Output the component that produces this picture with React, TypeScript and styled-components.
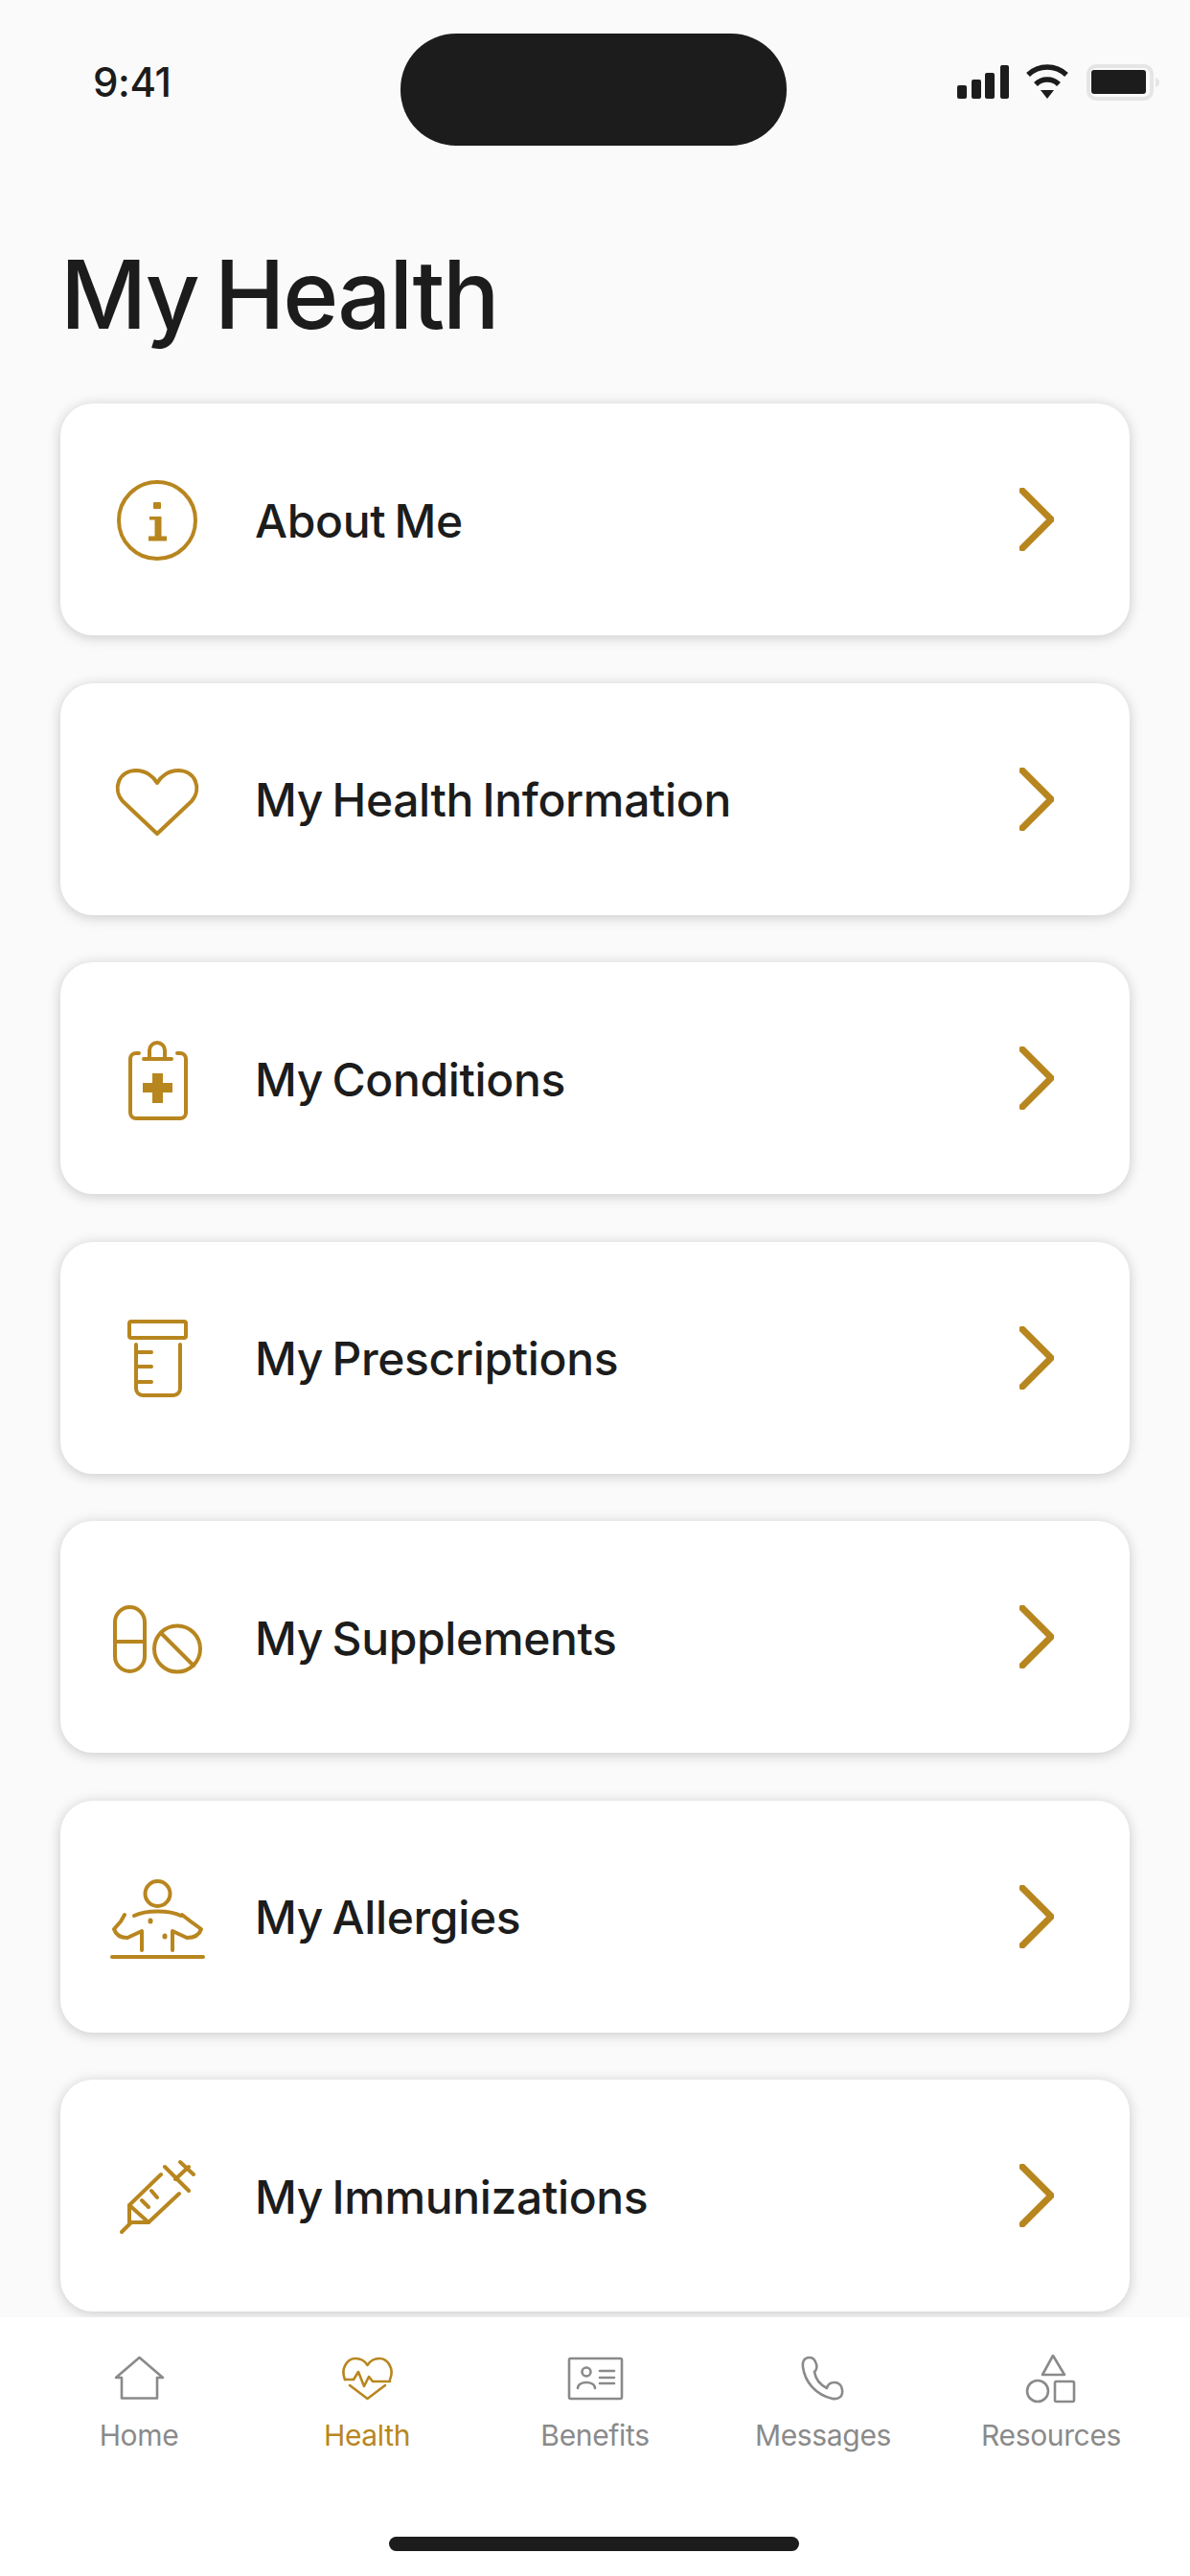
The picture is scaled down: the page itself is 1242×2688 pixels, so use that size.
import React from "react";
import styled, { createGlobalStyle } from "styled-components";

const GOLD = "#b8861f";
const GREY = "#8a8a8a";
const INK = "#1c1c1c";

const GlobalStyle = createGlobalStyle`
  html, body {
    margin: 0;
    padding: 0;
    background: #fafafa;
  }
  * {
    box-sizing: border-box;
  }
`;

const Screen = styled.div`
  width: 1242px;
  height: 2688px;
  display: flex;
  flex-direction: column;
  overflow: hidden;
  background: #fafafa;
  color: ${INK};
  font-family: Inter, "Liberation Sans", sans-serif;
`;

const StatusBar = styled.div`
  display: grid;
  grid-template-columns: 418px 403px 1fr;
  padding-top: 35px;
  height: 152px;
`;

const Clock = styled.div`
  padding: 29px 0 0 97px;
  font-size: 42px;
  line-height: 44px;
  font-weight: 500;
  letter-spacing: -0.4px;
`;

const Island = styled.div`
  height: 117px;
  border-radius: 58px;
  background: ${INK};
`;

const StatusIcons = styled.div`
  padding: 32px 0 0 176px;
  line-height: 0;
`;

const Content = styled.main`
  flex: 1;
  min-height: 0;
  overflow: hidden;
  padding: 0 63px;
`;

const Title = styled.h1`
  margin: 95px 0 0;
  height: 174px;
  font-size: 99px;
  line-height: 120px;
  font-weight: 550;
  letter-spacing: -2.2px;
  word-spacing: -7px;
`;

const List = styled.div`
  display: flex;
  flex-direction: column;
  gap: 49.5px;
`;

const Card = styled.div`
  height: 242px;
  flex: none;
  display: flex;
  align-items: center;
  padding: 0 79px 0 51px;
  border-radius: 34px;
  background: #fff;
  box-shadow: 0 2px 14px rgba(0, 0, 0, 0.2);
`;

const IconSlot = styled.svg`
  width: 100px;
  height: 100px;
  flex: none;
  fill: none;
  stroke: ${GOLD};
  stroke-width: 4;
  stroke-linecap: round;
  stroke-linejoin: round;
`;

const CardLabel = styled.div`
  flex: 1;
  margin-left: 52px;
  padding-top: 3px;
  font-size: 48px;
  line-height: 60px;
  font-weight: 550;
  letter-spacing: -0.35px;
  word-spacing: -3px;
`;

const Chevron = styled.svg`
  width: 36px;
  height: 66px;
  flex: none;
  fill: none;
  stroke: ${GOLD};
  stroke-width: 7;
  stroke-linecap: round;
  stroke-linejoin: miter;
`;

const TabBar = styled.nav`
  height: 270px;
  flex: none;
  position: relative;
  background: #fff;
`;

const TabRow = styled.div`
  display: grid;
  grid-template-columns: repeat(5, 238px);
  padding: 37px 26px 0;
`;

const Tab = styled.div<{ $active?: boolean }>`
  display: flex;
  flex-direction: column;
  align-items: center;
  color: ${(p) => (p.$active ? GOLD : GREY)};
`;

const TabIcon = styled.svg`
  width: 60px;
  height: 54px;
  fill: none;
  stroke: currentColor;
  stroke-width: 2.6;
  stroke-linecap: round;
  stroke-linejoin: round;
`;

const TabLabel = styled.span`
  margin-top: 13px;
  font-size: 30px;
  line-height: 38px;
  font-weight: 400;
  letter-spacing: -0.35px;
`;

const HomeIndicator = styled.div`
  position: absolute;
  left: 406px;
  bottom: 26px;
  width: 428px;
  height: 15px;
  border-radius: 8px;
  background: ${INK};
`;

const SignalWifiBattery = () => (
  <svg width="214" height="40" viewBox="0 0 214 40">
    <g fill={INK}>
      <rect x="2" y="22" width="10" height="14" rx="2" />
      <rect x="17" y="16" width="10" height="20" rx="2" />
      <rect x="31" y="9" width="10" height="27" rx="2" />
      <rect x="47" y="1" width="9" height="35" rx="2" />
      <path d="M76 11a29 29 0 0 1 40 0" fill="none" stroke={INK} strokeWidth="5.5" />
      <path d="M84 21a17 17 0 0 1 24 0" fill="none" stroke={INK} strokeWidth="5.5" />
      <path d="M89 27h14l-7 9z" />
      <rect x="139" y="2" width="66" height="34" rx="8" fill="none" stroke="#e5e5e5" strokeWidth="4" />
      <rect x="142" y="6" width="57" height="25" rx="3" />
      <path d="M209 14c3 1 4 3 4 5s-1 4-4 5z" fill="#e5e5e5" />
    </g>
  </svg>
);

const icons: Record<string, React.ReactNode> = {
  info: (
    <>
      <circle cx="50" cy="51" r="40" />
      <g fill={GOLD} stroke="none">
        <rect x="46" y="32" width="8" height="7" rx="1" />
        <rect x="47.5" y="47" width="7" height="22" />
        <rect x="42" y="47" width="7" height="3.5" />
        <rect x="41" y="67.5" width="19" height="5" />
      </g>
    </>
  ),
  heart: <path d="M50 86L14 52C3 39 10 20 28 20C38 20 46 26 50 33C54 26 62 20 72 20C90 20 97 39 86 52Z" />,
  clipboard: (
    <>
      <path d="M31 24H28a6 6 0 0 0-6 6V86a6 6 0 0 0 6 6H74a6 6 0 0 0 6-6V30a6 6 0 0 0-6-6H71" />
      <path d="M36 30H65M42 30V21a8 8 0 0 1 16 0V30" />
      <g fill={GOLD} stroke="none">
        <rect x="35" y="55" width="31" height="10" />
        <rect x="45" y="45" width="11" height="31" />
      </g>
    </>
  ),
  bottle: (
    <>
      <rect x="21" y="12" width="59" height="17" rx="2" />
      <path d="M28 36V82a7 7 0 0 0 7 7H67a7 7 0 0 0 7-7V36" />
      <path d="M28 44H44M28 59H44M28 75H44" />
    </>
  ),
  pills: (
    <>
      <rect x="6" y="19" width="31" height="67" rx="15.5" />
      <path d="M6 55H37" />
      <circle cx="71" cy="62.5" r="24" />
      <path d="M54 46L88 80" />
    </>
  ),
  body: (
    <>
      <circle cx="50.5" cy="26" r="13" />
      <path d="M26 49C38 43 63 43 75 49" />
      <path d="M16 48L12 55L5 63C7 69 12 72 19 72L34 65V85" />
      <path d="M76 48L85 55L96 63C94 69 89 72 81 72L66 65V85" />
      <path d="M43 54V55M58 70V71" strokeWidth="5" />
      <path d="M3 92H98" />
    </>
  ),
  syringe: (
    <>
      <path d="M13 88L23 78" />
      <path d="M21 60V78H41Z" strokeWidth="4" />
      <path d="M21 60L54 28M41 78L73 48M34 55L41 62M44 45L50 52" />
      <path d="M58 20L83 45M69 33L83 20M74 15L88 28" />
    </>
  ),
};

const tabIcons: Record<string, React.ReactNode> = {
  home: <path d="M6 26L30.5 5L55 26H49V47.5H12V26Z" />,
  health: (
    <>
      <path d="M7 28C2 16 10 6 18 6C24 6 28 9 30.5 13C33 9 37 6 43 6C51 6 59 16 54 28" />
      <path d="M12 34L30.5 48L49 34" />
      <path d="M7 28H16L21 20L27 35L32 25L36 30H54" />
    </>
  ),
  benefits: (
    <>
      <rect x="3" y="6" width="55" height="42" rx="1.5" />
      <circle cx="21" cy="20" r="4.5" />
      <path d="M12 37C12 29 30 29 30 37" />
      <path d="M35 19H50M35 26H50M35 32H50" />
    </>
  ),
  messages: (
    <path d="M16 5C10 5 8 10 9 15C11 30 22 44 40 48C47 49 51 45 50 39C50 34 46 31 42 31C38 31 35 33 34 37C26 33 22 26 21 20C23 18 24 15 23 12C22 8 20 5 16 5Z" />
  ),
  resources: (
    <>
      <path d="M32 3L21 23H44Z" />
      <circle cx="16" cy="40" r="11" />
      <rect x="34" y="30" width="20" height="21" rx="1.5" />
    </>
  ),
};

const rows = [
  { icon: "info", label: "About Me" },
  { icon: "heart", label: "My Health Information" },
  { icon: "clipboard", label: "My Conditions" },
  { icon: "bottle", label: "My Prescriptions" },
  { icon: "pills", label: "My Supplements" },
  { icon: "body", label: "My Allergies" },
  { icon: "syringe", label: "My Immunizations" },
];

const tabs = [
  { icon: "home", label: "Home" },
  { icon: "health", label: "Health", active: true },
  { icon: "benefits", label: "Benefits" },
  { icon: "messages", label: "Messages" },
  { icon: "resources", label: "Resources" },
];

const App: React.FC = () => (
  <Screen>
    <GlobalStyle />
    <StatusBar>
      <Clock>9:41</Clock>
      <Island />
      <StatusIcons>
        <SignalWifiBattery />
      </StatusIcons>
    </StatusBar>
    <Content>
      <Title>My Health</Title>
      <List>
        {rows.map((row) => (
          <Card key={row.label}>
            <IconSlot viewBox="0 0 100 100">{icons[row.icon]}</IconSlot>
            <CardLabel>{row.label}</CardLabel>
            <Chevron viewBox="0 0 36 66">
              <path d="M3 3L33 33L3 63" />
            </Chevron>
          </Card>
        ))}
      </List>
    </Content>
    <TabBar>
      <TabRow>
        {tabs.map((tab) => (
          <Tab key={tab.label} $active={tab.active}>
            <TabIcon viewBox="0 0 60 54">{tabIcons[tab.icon]}</TabIcon>
            <TabLabel>{tab.label}</TabLabel>
          </Tab>
        ))}
      </TabRow>
      <HomeIndicator />
    </TabBar>
  </Screen>
);

export default App;
